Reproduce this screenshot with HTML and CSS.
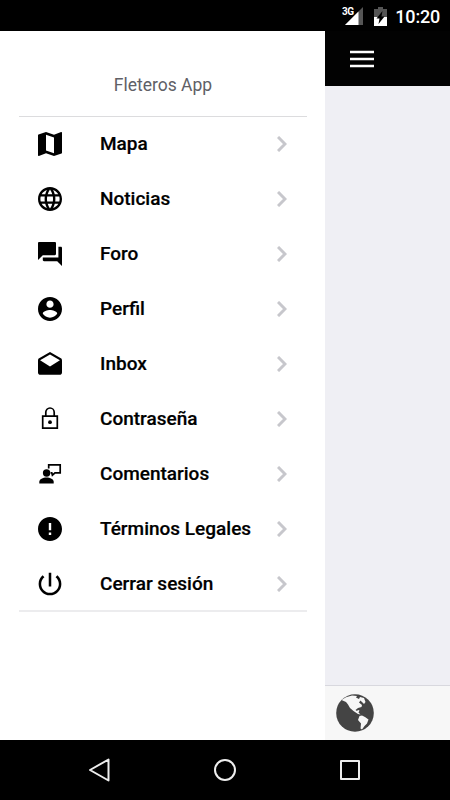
FILE: index.html
```html
<!DOCTYPE html>
<html lang="es">
<head>
    <meta charset="utf-8">
    <title>Fleteros App</title>
    <link rel="stylesheet" href="styles.css">
</head>
<body>
    <header class="status-bar">
        <svg class="signal" width="23" height="20" viewBox="0 0 23 20">
            <path fill="#555" d="M22 1v18H4z"/>
            <path fill="#fff" d="M17.500 5.500V19H4z"/>
            <text x="1" y="9">3G</text>
        </svg>
        <svg class="battery" width="13" height="19" viewBox="0 0 13 19">
            <path fill="#555" d="M4 0h5v2h4v17H0V2h4z"/>
            <path fill="#fff" d="M0 10h13v9H0z"/>
            <path fill="#000" d="M8.500 4L2.500 11.500h3L4.500 17l6-7.500h-3z"/>
        </svg>
        <span class="clock">10:20</span>
    </header>

    <main class="screen">
        <nav class="menu">
            <h1 class="menu-title">Fleteros App</h1>
            <ul class="menu-list">
                <li class="menu-item">
                    <svg class="icon" viewBox="3 3 18 18"><path d="M20.500 3l-.16.030L15 5.100 9 3 3.360 4.900c-.21.070-.36.250-.36.480V20.500c0 .28.220.5.5.5l.16-.030L9 18.900l6 2.100 5.640-1.900c.21-.070.360-.25.360-.48V3.500c0-.28-.22-.5-.5-.5zM15 19l-6-2.110V5l6 2.110V19z"/></svg>
                    <span class="label">Mapa</span>
                    <svg class="chevron" viewBox="0 0 10 16"><path d="M1 1l7 7-7 7"/></svg>
                </li>
                <li class="menu-item">
                    <svg class="icon" viewBox="2 2 20 20"><path d="M11.990 2C6.470 2 2 6.480 2 12s4.470 10 9.990 10C17.520 22 22 17.520 22 12S17.520 2 11.990 2zm6.930 6h-2.950c-.32-1.250-.78-2.450-1.380-3.560 1.840.63 3.370 1.910 4.330 3.560zM12 4.040c.83 1.200 1.480 2.530 1.910 3.960h-3.820c.43-1.430 1.080-2.760 1.910-3.960zM4.260 14C4.100 13.360 4 12.690 4 12s.1-1.360.26-2h3.380c-.08.66-.14 1.320-.14 2s.06 1.340.14 2H4.260zm.82 2h2.950c.32 1.250.78 2.450 1.380 3.560-1.840-.63-3.370-1.900-4.330-3.560zm2.950-8H5.080c.96-1.660 2.490-2.930 4.330-3.560C8.810 5.550 8.350 6.750 8.030 8zM12 19.960c-.83-1.200-1.480-2.530-1.910-3.960h3.820c-.43 1.430-1.080 2.760-1.910 3.960zM14.340 14H9.660c-.09-.66-.16-1.320-.16-2s.07-1.350.16-2h4.680c.09.65.16 1.320.16 2s-.07 1.340-.16 2zm.25 5.560c.6-1.110 1.060-2.310 1.380-3.560h2.950c-.96 1.650-2.490 2.930-4.330 3.560zM16.360 14c.08-.66.14-1.320.14-2s-.06-1.340-.14-2h3.380c.16.640.26 1.310.26 2s-.1 1.360-.26 2h-3.380z"/></svg>
                    <span class="label">Noticias</span>
                    <svg class="chevron" viewBox="0 0 10 16"><path d="M1 1l7 7-7 7"/></svg>
                </li>
                <li class="menu-item">
                    <svg class="icon" viewBox="2 2 20 20"><path d="M21 6h-2v9H6v2c0 .55.450 1 1 1h11l4 4V7c0-.55-.45-1-1-1zm-4 6V3c0-.55-.45-1-1-1H3c-.55 0-1 .45-1 1v14l4-4h10c.55 0 1-.45 1-1z"/></svg>
                    <span class="label">Foro</span>
                    <svg class="chevron" viewBox="0 0 10 16"><path d="M1 1l7 7-7 7"/></svg>
                </li>
                <li class="menu-item">
                    <svg class="icon" viewBox="2 2 20 20"><path d="M12 2C6.480 2 2 6.480 2 12s4.480 10 10 10 10-4.480 10-10S17.520 2 12 2zm0 3c1.660 0 3 1.340 3 3s-1.340 3-3 3-3-1.340-3-3 1.340-3 3-3zm0 14.200c-2.500 0-4.710-1.280-6-3.220.03-1.990 4-3.080 6-3.080 1.990 0 5.970 1.090 6 3.080-1.290 1.940-3.500 3.220-6 3.220z"/></svg>
                    <span class="label">Perfil</span>
                    <svg class="chevron" viewBox="0 0 10 16"><path d="M1 1l7 7-7 7"/></svg>
                </li>
                <li class="menu-item">
                    <svg class="icon" viewBox="2 1 20 20"><path d="M21.990 8c0-.72-.37-1.350-.94-1.700L12 1 2.950 6.300C2.380 6.650 2 7.280 2 8v10c0 1.100.900 2 2 2h16c1.100 0 2-.9 2-2l-.01-10zM12 13L3.740 7.840 12 3l8.260 4.840L12 13z"/></svg>
                    <span class="label">Inbox</span>
                    <svg class="chevron" viewBox="0 0 10 16"><path d="M1 1l7 7-7 7"/></svg>
                </li>
                <li class="menu-item">
                    <svg class="icon line" viewBox="0 0 24 24"><path d="M4.700 9.200h14.600v12H4.700zM7.800 9V5.300a4.200 4.300 0 0 1 8.400 0V9"/><circle class="dot" cx="12" cy="15.200" r="1.900"/></svg>
                    <span class="label">Contraseña</span>
                    <svg class="chevron" viewBox="0 0 10 16"><path d="M1 1l7 7-7 7"/></svg>
                </li>
                <li class="menu-item">
                    <svg class="icon" viewBox="0 0 24 24"><circle cx="8.600" cy="11" r="3.700"/><path d="M1.300 21.400v-1.600c0-2.800 3.600-4.400 7.200-4.400s7.200 1.600 7.200 4.400v1.600z"/><path class="bubble" d="M10.700 6.500V2.900h11.500v7.900H17l-2.600 2.300-.6-2.300h-1.200"/></svg>
                    <span class="label">Comentarios</span>
                    <svg class="chevron" viewBox="0 0 10 16"><path d="M1 1l7 7-7 7"/></svg>
                </li>
                <li class="menu-item">
                    <svg class="icon" viewBox="2 2 20 20"><path d="M12 2C6.480 2 2 6.480 2 12s4.480 10 10 10 10-4.480 10-10S17.520 2 12 2zm1 15h-2v-2h2v2zm0-4h-2V7h2v6z"/></svg>
                    <span class="label">Términos Legales</span>
                    <svg class="chevron" viewBox="0 0 10 16"><path d="M1 1l7 7-7 7"/></svg>
                </li>
                <li class="menu-item">
                    <svg class="icon" viewBox="2.500 2.500 19 19"><path d="M13 3h-2v11h2V3zm4.830 2.170l-1.420 1.420C17.990 7.860 19 9.810 19 12c0 3.870-3.130 7-7 7s-7-3.130-7-7c0-2.190 1.010-4.140 2.580-5.420L6.170 5.170C4.230 6.820 3 9.260 3 12c0 4.970 4.030 9 9 9s9-4.030 9-9c0-2.740-1.230-5.180-3.170-6.830z"/></svg>
                    <span class="label">Cerrar sesión</span>
                    <svg class="chevron" viewBox="0 0 10 16"><path d="M1 1l7 7-7 7"/></svg>
                </li>
            </ul>
        </nav>

        <section class="page">
            <div class="toolbar">
                <svg width="24" height="18" viewBox="0 0 24 18"><path d="M0 2h24M0 9h24M0 16h24"/></svg>
            </div>
            <div class="content"></div>
            <div class="tab-bar">
                <svg width="38" height="38" viewBox="0 0 38 38">
                    <circle cx="19" cy="19" r="18.800" fill="#444"/>
                    <path fill="#f7f7f7" d="M5.500 6L10 3.200 16 1.500 21 2 20 3.500 23 5 24 3 28 4 29.500 8 28 10 26 8 24.500 6.500 23 8.500 26 11 25.500 13 22 14 19.500 16 21 17 22 16 23.500 16.500 22.500 18.500 24.500 20.500 22 20 17.500 17 14 14 12 10.500 10 8z"/>
                    <path fill="#f7f7f7" d="M23.500 22L26 21.500 29 23 32.500 25.500 31 29.500 28.500 32 26 35.500 24.500 34.500 25 29.500 22 26z"/>
                </svg>
            </div>
        </section>
    </main>

    <footer class="nav-bar">
        <svg width="24" height="24" viewBox="0 0 24 24"><path d="M20.500 1.500v21L2 12z"/></svg>
        <svg width="24" height="24" viewBox="0 0 24 24"><circle cx="12" cy="12" r="10"/></svg>
        <svg width="24" height="24" viewBox="0 0 24 24"><path d="M3 3h18v18H3z"/></svg>
    </footer>
</body>
</html>
```
FILE: styles.css
```css
body {
    margin: 0;
    height: 800px;
    display: flex;
    flex-direction: column;
    overflow: hidden;
    background-color: black;
    font-family: Roboto, sans-serif;
}

svg {
    display: block;
    flex: none;
}

.status-bar {
    height: 31px;
    box-sizing: border-box;
    padding: 1px 10px 0 0;
    display: flex;
    justify-content: flex-end;
    align-items: center;
    color: white;
}

.signal text {
    fill: white;
    font-size: 10px;
    font-weight: bold;
    letter-spacing: -0.5px;
}

.battery {
    margin: 0 8px 0 10px;
}

.clock {
    font-size: 18px;
    font-weight: 500;
    letter-spacing: -0.2px;
}

.screen {
    height: 709px;
    display: flex;
}

.menu {
    width: 325px;
    box-sizing: border-box;
    padding: 0 18px 0 19px;
    background-color: white;
}

.menu-title {
    margin: 0;
    height: 85px;
    padding-top: 24px;
    box-sizing: border-box;
    line-height: 61px;
    font-size: 17.5px;
    font-weight: 400;
    text-align: center;
    color: #606066;
}

.menu-list {
    height: 496px;
    box-sizing: border-box;
    margin: 0;
    padding: 0;
    list-style: none;
    border-top: 1px solid #dcdcde;
    border-bottom: 2px solid #ececee;
}

.menu-item {
    height: 55px;
    box-sizing: border-box;
    padding: 0 20px 2px 19px;
    display: flex;
    align-items: center;
}

.icon {
    width: 24px;
    height: 24px;
    margin-right: 38px;
}

.label {
    flex: 1;
    font-size: 19px;
    font-weight: 500;
    color: black;
    white-space: nowrap;
    -webkit-text-stroke: 0.2px black;
}

.chevron {
    width: 10px;
    height: 16px;
    fill: none;
    stroke: #c7c7cc;
    stroke-width: 3;
}

.line,
.bubble {
    fill: none;
    stroke: black;
    stroke-width: 1.7;
}

.dot {
    fill: black;
    stroke: none;
}

.page {
    flex: 1;
    display: flex;
    flex-direction: column;
}

.toolbar {
    height: 55px;
    padding-left: 25px;
    display: flex;
    align-items: center;
    background-color: #020202;
}

.toolbar svg {
    stroke: white;
    stroke-width: 2.5;
}

.content {
    flex: 1;
    background-color: #efeff4;
}

.tab-bar {
    height: 55px;
    box-sizing: border-box;
    padding-left: 11px;
    display: flex;
    align-items: center;
    background-color: #f7f7f7;
    border-top: 1px solid #d8d8de;
}

.nav-bar {
    height: 60px;
    display: flex;
    justify-content: center;
    align-items: center;
    gap: 101px;
}

.nav-bar svg {
    fill: none;
    stroke: #eee;
    stroke-width: 2;
    stroke-linejoin: round;
}
```
